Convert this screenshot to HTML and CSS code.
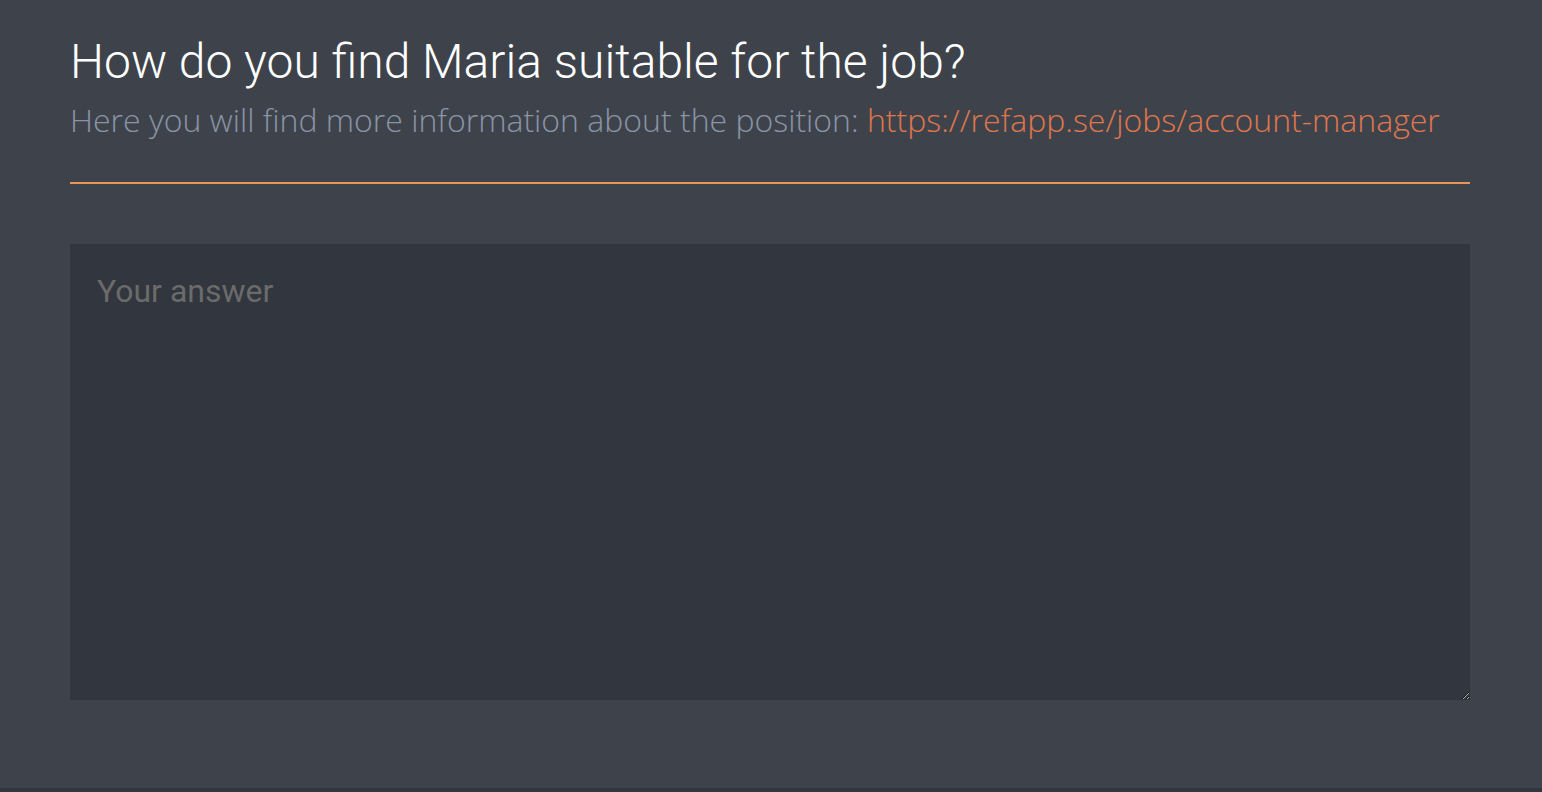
FILE: index.html
```html
<!DOCTYPE html>
<html lang="en">
<head>
    <meta charset="UTF-8">
    <meta name="viewport" content="width=device-width, initial-scale=1.0">
    <title>Reference question</title>
    <link rel="stylesheet" href="styles.css">
</head>
<body>
    <div class="panel">
        <div class="question">
            <h1>How do you find Maria suitable for the job?</h1>
            <p class="info">Here you will find more information about the position: <a href="#">https://refapp.se/jobs/account-manager</a></p>
        </div>
        <textarea class="answer" placeholder="Your answer"></textarea>
    </div>
</body>
</html>
```

FILE: styles.css
```css
*{
    padding: 0;margin: 0;
    box-sizing: border-box;
}
body{
    background-color: #32363e;
    font-family: Roboto, sans-serif;
}
.panel{
    height: 788px;
    background-color: #3e434b;
    padding: 34px 72px 0 70px;
}
.question{
    border-bottom: 2px solid #e8955a;
    padding-bottom: 42px;
    margin-bottom: 60px;
}
h1{
    font-family: Roboto, sans-serif;
    font-weight: 300;
    font-size: 48px;
    line-height: 56px;
    color: #ffffff;
}
.info{
    margin-top: 10px;
    font-family: "Open Sans", sans-serif;
    font-weight: 300;
    font-size: 32px;
    line-height: 40px;
    color: #8a94a6;
}
.info a{
    color: #e0774c;
    text-decoration: none;
}
.answer{
    display: block;
    width: 100%;
    height: 456px;
    background-color: #32363e;
    border: none;
    outline: none;
    padding: 28px 27px;
    font-family: Roboto, sans-serif;
    font-size: 32px;
    color: #d0d0d0;
}
.answer::placeholder{
    color: #6b6b6b;
}
```
